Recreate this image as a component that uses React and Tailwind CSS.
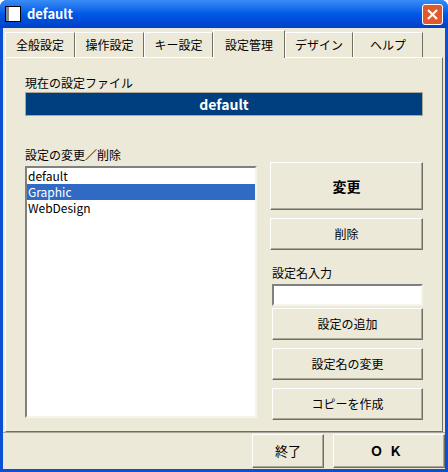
const font = { fontFamily: '"MS UI Gothic","Noto Sans CJK JP","Liberation Sans",sans-serif' };

function Btn({ children, className = "" }) {
  return (
    <div className={`flex items-center justify-center bg-[#ece9d8] border border-t-white border-l-white border-r-[#716f64] border-b-[#716f64] shadow-[inset_-1px_-1px_0_#aca899] text-[12px] text-black ${className}`}>
      {children}
    </div>
  );
}

const tabs = ["全般設定", "操作設定", "キー設定", "設定管理", "デザイン", "ヘルプ"];
const tabW = [70, 69, 69, 72, 68, 70];

export default function App() {
  return (
    <div className="w-[448px] h-[472px] flex flex-col bg-[#0a4fd4] rounded-t-[7px] overflow-hidden" style={font}>
      <div className="h-[28px] flex items-center px-[5px] bg-gradient-to-b from-[#3a8cf5] via-[#0058e6] to-[#0040c8]">
        <div className="w-[16px] h-[16px] bg-white border border-black shadow-[inset_3px_0_0_#888]" />
        <span className="ml-[6px] text-white font-bold text-[13px] flex-1">default</span>
        <div className="w-[21px] h-[21px] rounded-[3px] border border-white bg-[#e0582c] flex items-center justify-center">
          <svg width="11" height="11" viewBox="0 0 11 11"><path d="M1 1L10 10M10 1L1 10" stroke="white" strokeWidth="2.2" /></svg>
        </div>
      </div>
      <div className="flex-1 mx-[3px] mb-[3px] bg-[#ece9d8] flex flex-col">
        <div className="flex items-end h-[29px] pl-[2px] pt-[1px]">
          {tabs.map((t, i) => (
            <div
              key={t}
              style={{ width: tabW[i] }}
              className={
                i === 3
                  ? "h-[28px] -mb-px z-10 bg-[#ece9d8] border border-b-0 border-white border-r-[#716f64] flex items-center justify-center text-[12px]"
                  : "h-[25px] border border-b-0 border-white border-r-[#716f64] flex items-center justify-center text-[12px]"
              }
            >
              {t}
            </div>
          ))}
        </div>
        <div className="mx-[2px] h-[375px] border border-white border-r-[#716f64] border-b-[#716f64] px-[19px] pt-[18px] flex flex-col">
          <div className="text-[12px] leading-[14px]">現在の設定ファイル</div>
          <div className="mt-[2px] h-[24px] bg-[#003f7f] border border-[#aca899] text-white font-bold text-[14px] flex items-center justify-center">default</div>
          <div className="mt-[32px] text-[12px] leading-[14px]">設定の変更／削除</div>
          <div className="mt-[4px] flex gap-[13px]">
            <div className="w-[232px] h-[252px] bg-white border-2 border-t-[#808080] border-l-[#808080] border-r-[#f5f4ea] border-b-[#f5f4ea] text-[12px] leading-[16px]">
              <div className="h-[16px] px-[1px]">default</div>
              <div className="h-[16px] px-[1px] bg-[#316ac5] text-white">Graphic</div>
              <div className="h-[16px] px-[1px]">WebDesign</div>
            </div>
            <div className="flex-1 flex flex-col">
              <Btn className="h-[48px] -mt-[4px] font-bold text-[14px]">変更</Btn>
              <Btn className="h-[32px] mt-[8px]">削除</Btn>
              <div className="mt-[16px] ml-[2px] text-[12px] leading-[14px]">設定名入力</div>
              <div className="mt-[4px] ml-[2px] h-[22px] bg-white border-2 border-t-[#808080] border-l-[#808080] border-r-[#f5f4ea] border-b-[#f5f4ea]" />
              <Btn className="ml-[2px] h-[32px] mt-[2px]">設定の追加</Btn>
              <Btn className="ml-[2px] h-[32px] mt-[8px]">設定名の変更</Btn>
              <Btn className="ml-[2px] h-[32px] mt-[8px]">コピーを作成</Btn>
            </div>
          </div>
        </div>
        <div className="flex-1 flex justify-end items-center gap-[9px] border-t border-[#aca899]">
          <Btn className="w-[72px] h-[34px] text-[13px]">終了</Btn>
          <Btn className="w-[112px] h-[34px] font-bold text-[13px] tracking-[6px]">ＯＫ</Btn>
        </div>
      </div>
    </div>
  );
}
